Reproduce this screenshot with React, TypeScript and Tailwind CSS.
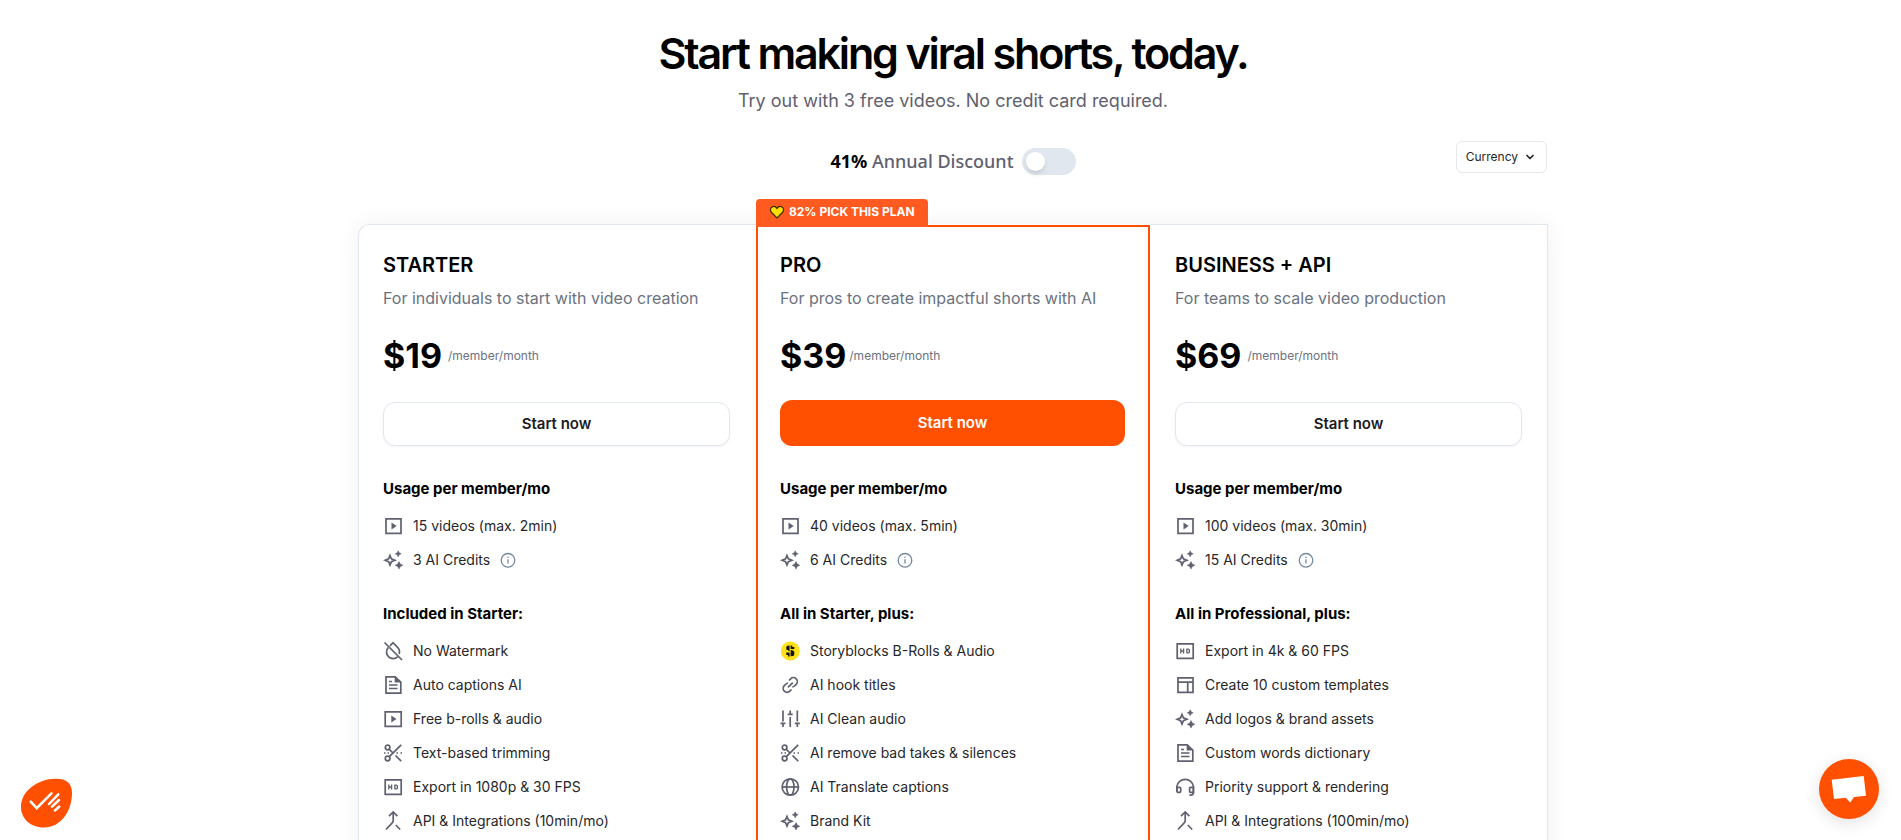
import type { ReactNode } from 'react'
import { ChevronDown } from 'lucide-react'

type Feature = { icon: ReactNode; label: string; info?: boolean }

type Plan = {
  name: string
  tagline: string
  price: string
  usage: Feature[]
  includedTitle: string
  included: Feature[]
  card: string
  button: string
  priceGap: string
  badge?: string
}

function Icon({ children }: { children: ReactNode }) {
  return (
    <svg viewBox="0 0 20 20" className="size-5 shrink-0 text-[#5f6070]" fill="none" stroke="currentColor" strokeWidth="1.7" aria-hidden="true">
      {children}
    </svg>
  )
}

const SquarePlay = () => (
  <Icon>
    <path d="M3 2.8h15v14.500H3z" />
    <path d="M8.500 6.600v6.800l5.200-3.400z" fill="currentColor" stroke="none" />
  </Icon>
)

const WidePlay = () => (
  <Icon>
    <path d="M2.200 2.800h16v14.500h-16z" />
    <path d="M8.300 6.600v6.800l5.200-3.400z" fill="currentColor" stroke="none" />
  </Icon>
)

const Sparkles = () => (
  <Icon>
    <path d="m7 5.500 1.400 3.400 3.400 1.400-3.400 1.400L7 15.100l-1.400-3.400-3.400-1.400 3.400-1.400z" />
    <path d="m15.200.8 1 2 2 1-2 1-1 2-1-2-2-1 2-1zM16 11.500l1.300 2.500 2.500 1.300-2.500 1.300L16 19.100l-1.300-2.500-2.500-1.300 2.500-1.300z" fill="currentColor" stroke="currentColor" strokeWidth=".5" />
  </Icon>
)

const NoDrop = () => (
  <Icon>
    <path d="M6.900 4.800 10 1.700l4.600 4.600a6.500 6.500 0 0 1 1.500 6.600M15 15.500A6.600 6.600 0 0 1 5.200 6.600" />
    <path d="m1.500 1.500 17.500 17.500" />
  </Icon>
)

const Document = () => (
  <Icon>
    <path d="M3 1.800h9.200L17.800 7v11.200H3z" />
    <path d="M11.700 1.500v6h6z" fill="currentColor" stroke="none" />
    <path d="M6 6.500h3M6 10h8.500M6 13.500h8.500" />
  </Icon>
)

const Scissors = () => (
  <Icon>
    <circle cx="4.600" cy="4.500" r="2.300" />
    <circle cx="4.600" cy="15.500" r="2.300" />
    <path d="m6.300 13.700 11.900-11.900M6.300 6.300l3.200 3.200M12.500 12.500l5.700 5.700" />
    <path d="M1 10h1.500M4.500 10H6M13.500 10H15M17.500 10H19" />
  </Icon>
)

const Hd = () => (
  <Icon>
    <path d="M2.200 2.800h16v14.500h-16z" />
    <path d="M5.800 7.500v5M8.600 7.500v5M5.800 10h2.800M11.900 8.100h1.300a1.200 1.200 0 0 1 1.200 1.200v1.400a1.200 1.200 0 0 1-1.200 1.200h-1.300z" strokeWidth="1.300" />
  </Icon>
)

const Merge = () => (
  <Icon>
    <path d="m6 5.200 4.200-4.200 4.200 4.200M10.200 1.500v8c0 1-.3 1.700-1 2.400L3 18.500M12.800 14l4.400 4.500" />
  </Icon>
)

const Storyblocks = () => (
  <svg viewBox="0 0 20 20" className="size-5 shrink-0" aria-hidden="true">
    <circle cx="10.300" cy="10" r="9.500" fill="#ffe11b" />
    <path d="M9.600 4.500v5.700L6.300 8.500V6.500q0-1.500 1.500-1.700zM10.600 4.500h1.700V6h2v2h-3.700zM10.600 9l2.400.6q1.300.4 1.300 1.900v1.700q0 1.500-1.500 1.700l-2.200.4zM9.600 15.500H8V14H6.300v-2.500h3.300z" fill="#111" />
  </svg>
)

const Chain = () => (
  <Icon>
    <path d="m8 12.300 4.800-4.600M9 5.500l1.700-1.700a3.700 3.700 0 0 1 5.500 5.500l-1.700 1.700a3.700 3.700 0 0 1-2.200 1M11.500 14.500l-1.700 1.700a3.700 3.700 0 0 1-5.500-5.500L6 9a3.700 3.700 0 0 1 2.200-1" />
  </Icon>
)

const Sliders = () => (
  <Icon>
    <path d="M3 1.500v11M.5 14.300h5M3 14.500v3.500M10.200 1.500v4M7.700 5.300h5M10.200 8v10M17.300 1.500v11M14.800 14.300h5M17.300 14.500v3.500" />
  </Icon>
)

const Globe = () => (
  <Icon>
    <circle cx="10.300" cy="10" r="8.200" />
    <ellipse cx="10.300" cy="10" rx="3.700" ry="8.200" />
    <path d="M2 10h16.500" />
  </Icon>
)

const Template = () => (
  <Icon>
    <path d="M3 2.800h15v14.500H3zM3 7.200h15M12.700 7.200v10" />
  </Icon>
)

const Headset = () => (
  <Icon>
    <path d="M1.900 14V9.500a8.300 8 0 0 1 16.500 0v6c0 1.600-.8 2.700-3 2.700h-1" />
    <path d="M1.900 10.300h2.800a1 1 0 0 1 1 1v3a1 1 0 0 1-1 1H2.900a1 1 0 0 1-1-1zM18.400 10.300h-2.800a1 1 0 0 0-1 1v3a1 1 0 0 0 1 1h2.800z" />
  </Icon>
)

const Info = () => (
  <svg viewBox="0 0 16 16" className="size-4 shrink-0 text-[#7487a3]" fill="none" stroke="currentColor" strokeWidth="1.300" role="img" aria-label="More information">
    <circle cx="8" cy="8.300" r="6.800" />
    <path d="M8 7.300v4.200M8 4.700v1.400" />
  </svg>
)

const Heart = () => (
  <svg viewBox="0 0 16 16" className="size-4 shrink-0" aria-hidden="true">
    <path d="M8 14 2.600 8.500C.8 6.500 1.200 4 3 3c1.800-1 3.900-.3 5 1.400C9.100 2.700 11.200 2 13 3c1.800 1 2.200 3.500.4 5.500z" fill="#fde000" stroke="#3a2c00" strokeWidth="1.200" />
  </svg>
)

const plans: Plan[] = [
  {
    name: 'STARTER',
    tagline: 'For individuals to start with video creation',
    price: '$19',
    usage: [
      { icon: <SquarePlay />, label: '15 videos (max. 2min)' },
      { icon: <Sparkles />, label: '3 AI Credits', info: true },
    ],
    includedTitle: 'Included in Starter:',
    included: [
      { icon: <NoDrop />, label: 'No Watermark' },
      { icon: <Document />, label: 'Auto captions AI' },
      { icon: <WidePlay />, label: 'Free b-rolls & audio' },
      { icon: <Scissors />, label: 'Text-based trimming' },
      { icon: <Hd />, label: 'Export in 1080p & 30 FPS' },
      { icon: <Merge />, label: 'API & Integrations (10min/mo)' },
    ],
    card: 'rounded-tl-xl border-t border-l border-[#e1e7ef] pt-6 pr-[26px] pl-6',
    button: 'mt-[23px] h-11 border border-[#e1e7ef] bg-white text-[#1b1b1f] shadow-xs',
    priceGap: 'gap-1.5',
  },
  {
    name: 'PRO',
    tagline: 'For pros to create impactful shorts with AI',
    price: '$39',
    usage: [
      { icon: <SquarePlay />, label: '40 videos (max. 5min)' },
      { icon: <Sparkles />, label: '6 AI Credits', info: true },
    ],
    includedTitle: 'All in Starter, plus:',
    included: [
      { icon: <Storyblocks />, label: 'Storyblocks B-Rolls & Audio' },
      { icon: <Chain />, label: 'AI hook titles' },
      { icon: <Sliders />, label: 'AI Clean audio' },
      { icon: <Scissors />, label: 'AI remove bad takes & silences' },
      { icon: <Globe />, label: 'AI Translate captions' },
      { icon: <Sparkles />, label: 'Brand Kit' },
    ],
    card: 'mt-px border-2 border-[#ff4f00] pt-[22px] pr-[23px] pl-[22px]',
    button: 'mt-[21px] h-[46px] bg-[#ff4f00] text-white',
    priceGap: 'gap-[3px]',
    badge: '82% PICK THIS PLAN',
  },
  {
    name: 'BUSINESS + API',
    tagline: 'For teams to scale video production',
    price: '$69',
    usage: [
      { icon: <SquarePlay />, label: '100 videos (max. 30min)' },
      { icon: <Sparkles />, label: '15 AI Credits', info: true },
    ],
    includedTitle: 'All in Professional, plus:',
    included: [
      { icon: <Hd />, label: 'Export in 4k & 60 FPS' },
      { icon: <Template />, label: 'Create 10 custom templates' },
      { icon: <Sparkles />, label: 'Add logos & brand assets' },
      { icon: <Document />, label: 'Custom words dictionary' },
      { icon: <Headset />, label: 'Priority support & rendering' },
      { icon: <Merge />, label: 'API & Integrations (100min/mo)' },
    ],
    card: 'border-t border-r border-[#e1e7ef] px-[25px] pt-6',
    button: 'mt-[23px] h-11 border border-[#e1e7ef] bg-white text-[#1b1b1f] shadow-xs',
    priceGap: 'gap-1.5',
  },
]

function FeatureList({ title, items }: { title: string; items: Feature[] }) {
  return (
    <div>
      <h3 className="text-[15px] leading-6 font-bold text-black">{title}</h3>
      <ul className="mt-2">
        {items.map(item => (
          <li key={item.label} className="flex h-[34px] items-center gap-[10px] text-sm text-[#27272a]">
            {item.icon}
            <span>{item.label}</span>
            {item.info && <Info />}
          </li>
        ))}
      </ul>
    </div>
  )
}

function PlanCard({ plan }: { plan: Plan }) {
  return (
    <section className={`relative bg-white pb-8 ${plan.card}`}>
      {plan.badge && (
        <div className="absolute -top-7 -left-0.5 flex h-7 items-center gap-1 rounded-t bg-[#ff5a1f] px-[13px] pb-0.5 text-xs font-bold text-white">
          <Heart />
          {plan.badge}
        </div>
      )}
      <h2 className="text-xl leading-8 font-semibold text-black">{plan.name}</h2>
      <p className="mt-0.5 text-base leading-[30px] text-[#6b7280]">{plan.tagline}</p>
      <div className={`mt-5 flex items-center ${plan.priceGap}`}>
        <span className="text-[34px] leading-[46px] font-bold text-black">{plan.price}</span>
        <span className="text-xs text-[#6b7280]">/member/month</span>
      </div>
      <button type="button" className={`w-full rounded-xl text-[15px] font-semibold ${plan.button}`}>
        Start now
      </button>
      <div className="mt-[31px] flex flex-col gap-[25px]">
        <FeatureList title="Usage per member/mo" items={plan.usage} />
        <FeatureList title={plan.includedTitle} items={plan.included} />
      </div>
    </section>
  )
}

export default function App() {
  return (
    <main className="h-screen overflow-hidden bg-white pl-[5px] font-['Inter',sans-serif] text-black">
      <div className="mx-auto max-w-[1190px] pt-6">
        <header className="text-center">
          <h1 className="text-[43px] leading-[58px] font-semibold tracking-tighter">Start making viral shorts, today.</h1>
          <p className="mt-[5px] text-lg leading-7 text-[#5f6070]">Try out with 3 free videos. No credit card required.</p>
        </header>

        <div className="mt-[26px] grid grid-cols-[1fr_auto_1fr] items-start">
          <label className="col-start-2 flex h-10 items-center gap-2 font-['Noto_Sans',sans-serif] text-lg font-medium text-[#5f6070]">
            <span>
              <strong className="font-bold text-black">41%</strong> Annual Discount
            </span>
            <input type="checkbox" role="switch" className="peer sr-only" />
            <span className="flex h-[27px] w-[54px] items-center rounded-full bg-[#e1e7ef] px-1 peer-checked:justify-end peer-checked:bg-[#ff4f00]">
              <span className="size-[19px] rounded-full bg-white shadow-md" />
            </span>
          </label>
          <button type="button" className="mr-px flex h-8 items-center gap-1.5 justify-self-end rounded-md border border-[#e8e8ea] pr-[10px] pl-[9px] text-xs text-[#27272a]">
            Currency
            <ChevronDown className="size-3" strokeWidth={3.5} aria-hidden="true" />
          </button>
        </div>

        <div className="mt-[43px] grid grid-cols-[398fr_394fr_398fr] rounded-tl-xl shadow-[0_0_24px_rgba(0,0,0,0.06)]">
          {plans.map(plan => (
            <PlanCard key={plan.name} plan={plan} />
          ))}
        </div>
      </div>

      <button type="button" aria-label="Privacy settings" className="fixed bottom-3 left-5">
        <svg viewBox="0 0 54 50" className="h-[50px] w-[54px]" aria-hidden="true">
          <path d="M35 .8C46 .4 52 5 52 15c0 18-11 34.500-28 34.500C10 49.500 1 40 1 29 1 13 18 1 35 .8z" fill="#ff4f00" />
          <path d="m10.700 23.700 6 6.500L31.500 15.300M29 26l9.300-9.700M32 28.700l7-6.700M35 32.500l4.300-4" fill="none" stroke="#fff" strokeWidth="2.500" strokeLinecap="round" />
        </svg>
      </button>
      <button type="button" aria-label="Open chat" className="fixed right-[22px] bottom-[21px] flex size-[60px] items-center justify-center rounded-full bg-[#ff4f00] shadow-[0_4px_16px_rgba(0,0,0,0.12)]">
        <svg viewBox="0 0 60 60" className="size-[60px]" aria-hidden="true">
          <path d="m12.700 20.700 32-3.700L47 36.700 35 38l-3.700 5.500-4.600-4.800L15 40z" fill="#fff" />
        </svg>
      </button>
    </main>
  )
}
